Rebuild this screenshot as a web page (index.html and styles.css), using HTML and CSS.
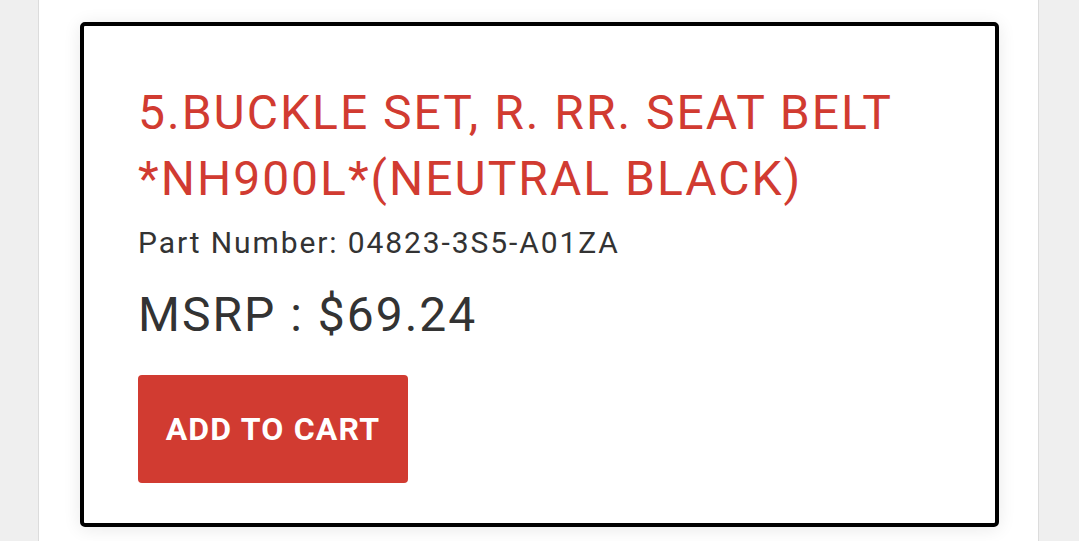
FILE: index.html
```html
<!DOCTYPE html>
<html>
<head>
<meta charset="utf-8">
<link rel="stylesheet" href="styles.css">
</head>
<body>
<div class="page">
  <div class="card">
    <h2 class="title">5.BUCKLE SET, R. RR. SEAT BELT *NH900L*(NEUTRAL BLACK)</h2>
    <div class="part">Part Number: 04823-3S5-A01ZA</div>
    <div class="price">MSRP : $69.24</div>
    <button class="btn">ADD TO CART</button>
  </div>
</div>
</body>
</html>
```

FILE: styles.css
```css
html, body {
  margin: 0;
  padding: 0;
  background: #efefef;
  font-family: Roboto, "Liberation Sans", sans-serif;
  height: 100%;
  overflow: hidden;
}
.page {
  margin-left: 38px;
  width: 1001px;
  min-height: 100%;
  background: #fff;
  border-left: 1px solid #dcdcdc;
  border-right: 1px solid #dcdcdc;
  padding: 22px 39px 0 41px;
  box-sizing: border-box;
}
.card {
  border: 4px solid #000;
  border-radius: 5px;
  box-shadow: 0 2px 18px rgba(0, 0, 0, 0.09);
  padding: 54px 54px 40px 54px;
  height: 505px;
  box-sizing: border-box;
}
.title {
  margin: 0;
  color: #d13b31;
  font-weight: 400;
  font-size: 48px;
  line-height: 66px;
  letter-spacing: 2px;
  max-width: 800px;
}
.part {
  color: #333;
  font-size: 30px;
  line-height: 40px;
  letter-spacing: 1.9px;
  margin-top: 11px;
}
.price {
  color: #333;
  font-size: 48px;
  line-height: 60px;
  letter-spacing: 2px;
  margin-top: 22px;
}
.btn {
  display: block;
  margin-top: 30px;
  width: 270px;
  height: 108px;
  background: #d13b31;
  color: #fff;
  border: none;
  border-radius: 4px;
  font-family: Roboto, "Liberation Sans", sans-serif;
  font-weight: 700;
  font-size: 32px;
  letter-spacing: 1.2px;
  padding: 0;
}
```
